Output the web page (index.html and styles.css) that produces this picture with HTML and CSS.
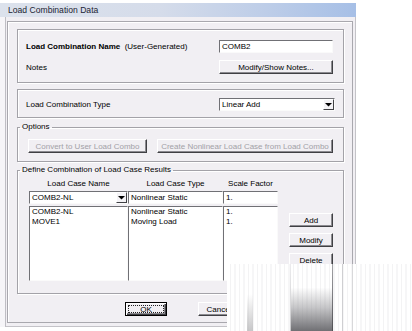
FILE: index.html
```html
<!DOCTYPE html>
<html>
<head>
<meta charset="utf-8">
<title>Load Combination Data</title>
<link rel="stylesheet" href="styles.css">
</head>
<body>
<div class="window">
  <div class="titlebar">Load Combination Data</div>
  <div class="panel">
    <div class="box name-box">
      <div class="label"><b>Load Combination Name</b>&nbsp; (User-Generated)</div>
      <div class="textbox">COMB2</div>
      <div class="label">Notes</div>
      <div class="btn">Modify/Show Notes...</div>
    </div>
    <div class="box type-box">
      <div class="label">Load Combination Type</div>
      <div class="combo">
        <span class="combo-text">Linear Add</span>
        <span class="combo-btn"><svg width="7" height="6" viewBox="0 0 7 6"><path d="M0 1h7L3.5 4.5z" fill="#000"/></svg></span>
      </div>
    </div>
    <fieldset class="group options">
      <legend>Options</legend>
      <div class="options-row">
        <div class="btn disabled convert">Convert to User Load Combo</div>
        <div class="btn disabled create">Create Nonlinear Load Case from Load Combo</div>
      </div>
    </fieldset>
    <fieldset class="group define">
      <legend>Define Combination of Load Case Results</legend>
      <div class="define-body">
        <div class="table">
          <div class="th">Load Case Name</div>
          <div class="th">Load Case Type</div>
          <div class="th">Scale Factor</div>
          <div class="combo">
            <span class="combo-text">COMB2-NL</span>
            <span class="combo-btn"><svg width="7" height="6" viewBox="0 0 7 6"><path d="M0 1h7L3.5 4.5z" fill="#000"/></svg></span>
          </div>
          <div class="textbox">Nonlinear Static</div>
          <div class="textbox">1.</div>
          <div class="list">COMB2-NL<br>MOVE1</div>
          <div class="list">Nonlinear Static<br>Moving Load</div>
          <div class="list">1.<br>1.</div>
        </div>
        <div class="side-buttons">
          <div class="btn">Add</div>
          <div class="btn">Modify</div>
          <div class="btn">Delete</div>
        </div>
      </div>
    </fieldset>
    <div class="footer">
      <div class="btn default">OK</div>
      <div class="btn">Cancel</div>
    </div>
  </div>
</div>
<div class="smudge"></div>
</body>
</html>
```
FILE: styles.css
```css
* { box-sizing: border-box; }
html, body { margin: 0; padding: 0; }
body {
  width: 412px;
  height: 331px;
  overflow: hidden;
  background: #fff;
  font-family: "Liberation Sans", Arial, sans-serif;
  font-size: 8px;
  color: #000;
  position: relative;
}
.window {
  margin-top: 3px;
  width: 356px;
  height: 324px;
  background: #f1eff3;
  box-shadow: inset 5px 0 0 #f6f5f8, inset 6px 0 0 #bfbec4, inset -1px -1px 0 #c4c3c8;
}
.titlebar {
  height: 14px;
  line-height: 14px;
  padding-left: 8px;
  font-size: 8.6px;
  color: #1c2433;
  background: linear-gradient(to right, #dce2ec 0%, #d5dcea 45%, #bdcde8 75%, #a6bfe6 100%);
}
.panel {
  margin: 4px 3px 0 7px;
  height: 302px;
  border: 1px solid #a9a8ae;
  box-shadow: inset 1px 1px 0 #fff;
  padding: 7px 8px 0 9px;
}
.box {
  border: 1px solid #a3a2a8;
  box-shadow: inset 1px 1px 0 #fff, 1px 1px 0 #fff;
}
.label { padding-left: 0; white-space: nowrap; }
.name-box {
  display: grid;
  grid-template-columns: 1fr 114px;
  grid-template-rows: 13px 14px;
  row-gap: 7px;
  align-items: center;
  padding: 10px 10px 8px 8px;
}
.type-box {
  margin-top: 6px;
  display: grid;
  grid-template-columns: 1fr 116px;
  grid-template-rows: 13px;
  align-items: center;
  padding: 8px 8px 6px 8px;
}
.textbox {
  height: 13px;
  line-height: 11px;
  padding-left: 2px;
  background: #fff;
  border: 1px solid;
  border-color: #707075 #fafafa #fafafa #707075;
  white-space: nowrap;
  overflow: hidden;
}
.combo {
  height: 13px;
  display: flex;
  align-items: stretch;
  background: #fff;
  border: 1px solid;
  border-color: #707075 #fafafa #fafafa #707075;
}
.combo-text { flex: 1; line-height: 11px; padding-left: 2px; white-space: nowrap; }
.combo-btn {
  width: 11px;
  display: flex;
  align-items: center;
  justify-content: center;
  background: #f4f3f6;
  border: 1px solid;
  border-color: #fff #404044 #404044 #fff;
}
.btn {
  display: flex;
  align-items: center;
  justify-content: center;
  height: 14px;
  background: #f1eff3;
  border: 1px solid;
  border-color: #fff #404044 #404044 #fff;
  box-shadow: inset -1px -1px 0 #8c8b90;
  white-space: nowrap;
}
.btn.disabled { color: #a2a1a7; }
.group {
  margin: 4px 0 0;
  padding: 0;
  min-width: 0;
  border: 1px solid #a3a2a8;
  box-shadow: inset 1px 1px 0 #fff, 1px 1px 0 #fff;
}
.group legend {
  margin-left: 2px;
  padding: 0 2px;
  line-height: 10px;
  font-size: 8px;
}
.options-row {
  display: flex;
  gap: 10px;
  padding: 7px 0 8px 10px;
}
.convert { width: 119px; }
.create { width: 176px; }
.define { margin-top: 3px; }
.define-body {
  display: flex;
  padding: 4px 0 12px 11px;
}
.table {
  display: grid;
  grid-template-columns: 99px 95px 55px;
  grid-template-rows: 10px 13px 75px;
  row-gap: 2px;
}
.th { text-align: center; line-height: 10px; white-space: nowrap; }
.list {
  background: #fff;
  border: 1px solid;
  border-color: #707075 #fafafa #fafafa #707075;
  padding: 0 0 0 2px;
  line-height: 10px;
}
.side-buttons {
  margin-left: 11px;
  width: 44px;
  display: flex;
  flex-direction: column;
  gap: 6px;
  padding-top: 34px;
}
.footer {
  display: flex;
  gap: 31px;
  margin-top: 8px;
  padding-left: 108px;
}
.footer .btn { width: 42px; }
.btn.default {
  border: 1px solid #000;
  box-shadow: inset 1px 1px 0 #fff, inset -1px -1px 0 #404044, inset -2px -2px 0 #8c8b90;
  outline: 1px dotted #222;
  outline-offset: -4px;
}
.smudge {
  position: absolute;
  left: 227px;
  top: 264px;
  width: 185px;
  height: 67px;
  background:
    linear-gradient(#cfcfd2, #cfcfd2) 115px 0 / 1px 100% no-repeat,
    linear-gradient(#d8d8da, #d8d8da) 125px 0 / 1px 100% no-repeat,
    linear-gradient(#a4a4a8, #505054) 105px 0 / 1px 100% no-repeat,
    linear-gradient(#ececee, #c8c8ca) 63px 0 / 1px 100% no-repeat,
    linear-gradient(rgba(255,255,255,0) 0%, rgba(255,255,255,0) 35%, rgba(150,150,154,0.55) 65%, #707074 100%) 64px 0 / 41px 100% no-repeat,
    linear-gradient(rgba(255,255,255,0) 45%, rgba(180,180,182,0.75) 100%) 20px 0 / 6px 100% no-repeat,
    repeating-linear-gradient(to right, #fff 0 3px, #f3f3f4 3px 4px, #fff 4px 7px, #f6f6f7 7px 9px),
    #fff;
}
```
